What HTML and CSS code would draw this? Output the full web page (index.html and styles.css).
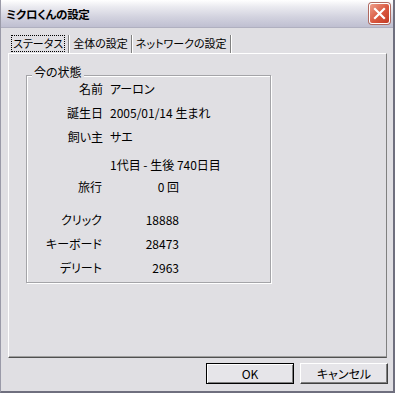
FILE: index.html
```html
<!DOCTYPE html>
<html lang="ja">
<head>
<meta charset="UTF-8" />
<title>ミクロくんの設定</title>
<link rel="stylesheet" href="styles.css">
</head>
<body>

<div class="window">
  <div class="titlebar">
    <span class="title">ミクロくんの設定</span>
    <button class="close" aria-label="閉じる">
      <svg width="13" height="13" viewBox="0 0 13 13">
        <path d="M2 2 L11 11 M11 2 L2 11" stroke="#fff" stroke-width="2.2" stroke-linecap="square" />
      </svg>
    </button>
  </div>

  <div class="content">
    <div class="tabs">
      <div class="tab active"><span class="focus">ステータス</span></div>
      <div class="tab">全体の設定</div>
      <div class="tab">ネットワークの設定</div>
    </div>

    <div class="panel">
      <div class="group">
        <span class="group-label">今の状態</span>

        <div class="row">
          <span class="label">名前</span>
          <span class="value">アーロン</span>
        </div>
        <div class="row">
          <span class="label">誕生日</span>
          <span class="value">2005/01/14 生まれ</span>
        </div>
        <div class="row">
          <span class="label">飼い主</span>
          <span class="value">サエ</span>
        </div>
        <div class="row gen">
          <span class="label"></span>
          <span class="value">1代目 - 生後 740日目</span>
        </div>
        <div class="row count trip">
          <span class="label">旅行</span>
          <span class="value">0 回</span>
        </div>

        <div class="row count first">
          <span class="label">クリック</span>
          <span class="value">18888</span>
        </div>
        <div class="row count">
          <span class="label">キーボード</span>
          <span class="value">28473</span>
        </div>
        <div class="row count">
          <span class="label">デリート</span>
          <span class="value">2963</span>
        </div>
      </div>
    </div>

    <div class="buttons">
      <button class="btn default">OK</button>
      <button class="btn">キャンセル</button>
    </div>
  </div>
</div>

</body>
</html>
```

FILE: styles.css
```css
/* Base */
* {
  box-sizing: border-box;
}
body {
  margin: 0;
  width: 395px;
  height: 393px;
  overflow: hidden;
  font-family: "Noto Sans CJK JP", "Noto Sans", sans-serif;
  font-size: 12px;
  font-feature-settings: "palt";
  color: #000;
  background: #e0dfe3;
}
button {
  font: inherit;
  color: inherit;
  padding: 0;
}

/* Window frame */
.window {
  width: 395px;
  height: 393px;
  display: flex;
  flex-direction: column;
  background: #e0dfe3;
  border-left: 1px solid #9a9aa8;
  border-right: 2px solid #6f6f7e;
  border-bottom: 2px solid #6f6f7e;
}

/* Title bar */
.titlebar {
  height: 28px;
  flex: none;
  display: flex;
  align-items: center;
  justify-content: space-between;
  padding: 0 3px 0 5px;
  background: linear-gradient(#ffffff, #ebebf0 25%, #d4d4e0 60%, #bfbfd1);
  border-bottom: 1px solid #b0b0c0;
}
.title {
  font-weight: bold;
  font-size: 11.5px;
  letter-spacing: -0.3px;
}
.close {
  width: 21px;
  height: 21px;
  border: 1px solid #fff;
  border-radius: 3px;
  background: linear-gradient(135deg, #ee9e8a, #d9573f 55%, #c23a24);
  display: flex;
  align-items: center;
  justify-content: center;
  box-shadow: 0 0 0 1px #b06a60;
}

/* Content */
.content {
  flex: 1;
  display: flex;
  flex-direction: column;
  padding: 0 6px 0 7px;
}

/* Tabs (flat buttons) */
.tabs {
  height: 25px;
  display: flex;
  align-items: flex-end;
  padding-left: 3px;
  font-size: 11px;
}
.tab {
  height: 18px;
  line-height: 16px;
  padding: 0 3px 0 2px;
  margin-right: 2px;
  border-right: 1px solid #808080;
  box-shadow: 1px 0 0 #fff;
}
.tab.active {
  padding-left: 0;
}
.focus {
  display: inline-block;
  height: 17px;
  padding: 0 1px;
  border: 1px dotted #000;
  line-height: 14px;
}

/* Panel */
.panel {
  height: 305px;
  border-top: 1px solid #fff;
  border-left: 1px solid #fff;
  border-right: 1px solid #808080;
  border-bottom: 1px solid #505050;
  box-shadow: inset 0 -1px 0 #a0a0a0;
  padding: 21px 0 0 17px;
}

/* Group box */
.group {
  position: relative;
  width: 245px;
  height: 208px;
  border: 1px solid #a4a4a8;
  box-shadow: 1px 1px 0 #fff, inset 1px 1px 0 #fff;
  padding-top: 1px;
}
.group-label {
  position: absolute;
  top: -11px;
  left: 5px;
  padding: 0 2px;
  line-height: 14px;
  background: #e0dfe3;
}

.row {
  display: flex;
  height: 24px;
  line-height: 24px;
  white-space: nowrap;
}
.row .label {
  width: 76px;
  text-align: right;
}
.row .value {
  margin-left: 7px;
}
.row.gen {
  margin-top: 4px;
}
.row.count .label {
  width: 75px;
}
.row.count .value {
  margin-left: 0;
  width: 77px;
  text-align: right;
}
.row.trip {
  margin-top: -2px;
}
.row.first {
  margin-top: 9px;
}

/* Buttons */
.buttons {
  display: flex;
  justify-content: flex-end;
  gap: 6px;
  margin-top: 5px;
  margin-right: -1px;
}
.btn {
  width: 88px;
  height: 21px;
  line-height: 17px;
  background: #e6e5e9;
  border-top: 1px solid #fff;
  border-left: 1px solid #fff;
  border-right: 1px solid #404040;
  border-bottom: 1px solid #404040;
  box-shadow: inset -1px -1px 0 #808080;
}
.btn.default {
  border: 1px solid #000;
  box-shadow: inset 1px 1px 0 #fff, inset -1px -1px 0 #808080;
}
```
